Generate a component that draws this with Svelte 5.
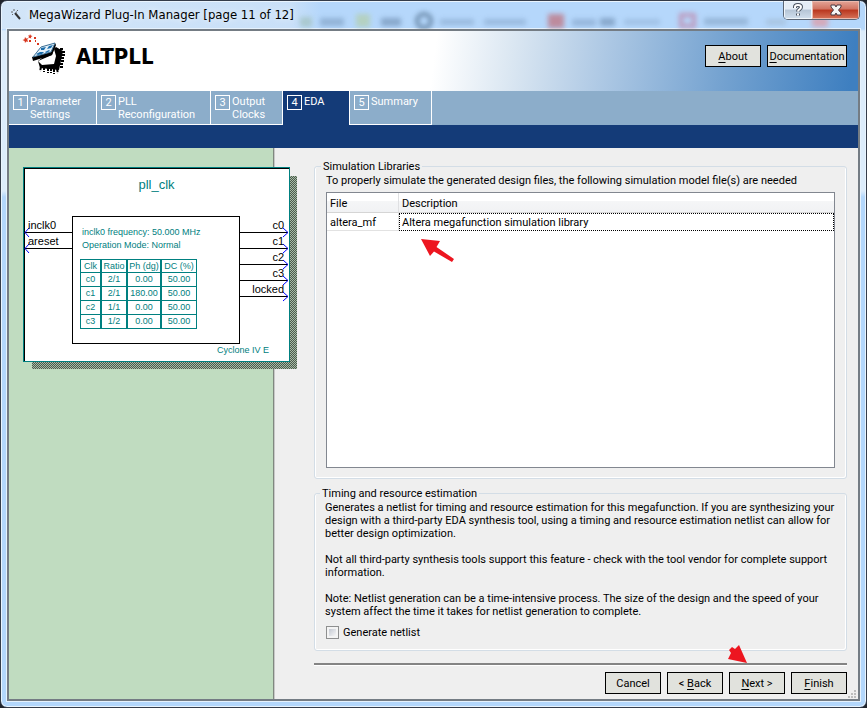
<script>
  const tabs = [
    { n: 1, lines: ['Parameter', 'Settings'], w: 88 },
    { n: 2, lines: ['PLL', 'Reconfiguration'], w: 114 },
    { n: 3, lines: ['Output', 'Clocks'], w: 72 },
    { n: 4, lines: ['EDA'], w: 66, active: true },
    { n: 5, lines: ['Summary'], w: 83, last: true }
  ];
  const clocks = [
    ['c0', '2/1', '0.00', '50.00'],
    ['c1', '2/1', '180.00', '50.00'],
    ['c2', '1/1', '0.00', '50.00'],
    ['c3', '1/2', '0.00', '50.00']
  ];
  const inputs = ['inclk0', 'areset'];
  const outputs = ['c0', 'c1', 'c2', 'c3', 'locked'];
  let netlist = $state(false);
</script>

<div class="window">
  <header class="titlebar">
    <svg class="glass" width="600" height="28" viewBox="0 0 600 28" aria-hidden="true">
      <defs><filter id="soft" x="-20%" y="-60%" width="140%" height="220%"><feGaussianBlur stdDeviation="2.5" /></filter></defs>
      <g filter="url(#soft)">
        <rect x="22" y="16" width="12" height="10" fill="#a3c2c0" />
        <rect x="42" y="17" width="24" height="8" fill="#86a7ca" />
        <rect x="78" y="13" width="14" height="13" fill="#b4cfae" />
        <rect x="103" y="17" width="20" height="8" fill="#7898bb" />
        <circle cx="146" cy="20" r="7" fill="none" stroke="#557392" stroke-width="4" />
        <rect x="162" y="18" width="34" height="6" fill="#90b0d4" />
        <rect x="206" y="18" width="42" height="6" fill="#90b0d4" />
        <rect x="270" y="13" width="16" height="14" fill="#c0727e" />
        <rect x="294" y="18" width="24" height="7" fill="#8cabd0" />
        <rect x="322" y="17" width="15" height="8" fill="#7898bb" />
        <rect x="346" y="18" width="36" height="6" fill="#9abade" />
        <rect x="403" y="14" width="13" height="11" fill="none" stroke="#c084a8" stroke-width="4" />
        <rect x="426" y="17" width="44" height="7" fill="#8babcd" />
        <rect x="488" y="18" width="20" height="6" fill="#a4bed8" />
        <rect x="534" y="16" width="16" height="10" fill="#e09aa4" />
      </g>
    </svg>
    <svg class="wand" width="12" height="12" viewBox="0 0 12 12" aria-hidden="true">
      <path d="M4 4L9 10" stroke="#333" stroke-width="2" />
      <path d="M3 0v2M0 3h2M6 2l1-1M1 6l1-1M5 3h1" stroke="#666" stroke-width="1" />
    </svg>
    <h1>MegaWizard Plug-In Manager [page 11 of 12]</h1>
    <div class="caption">
      <button class="help" aria-label="Help">
        <svg width="12" height="14" viewBox="0 0 12 14"><path d="M3 5V4q0-2 3-2t3 2q0 1.500-1.500 2.300T6 8.500M6 10.500v2" fill="none" stroke="#4a5360" stroke-width="4" /><path d="M3 5V4q0-2 3-2t3 2q0 1.500-1.500 2.300T6 8.500M6 10.500v2" fill="none" stroke="#fff" stroke-width="2" /></svg>
      </button>
      <button class="close" aria-label="Close">
        <svg width="12" height="12" viewBox="0 0 12 12"><path d="M1 1h4l1 2 1-2h4v2L8.500 6 11 9v2H7L6 9l-1 2H1V9l2.500-3L1 3z" fill="#f4f4f4" stroke="#4c3b43" stroke-width="1" /></svg>
      </button>
    </div>
  </header>

  <div class="client">
    <div class="banner">
      <svg class="logo" width="46" height="44" viewBox="0 0 46 44" aria-hidden="true">
        <g fill="#d8361e">
          <path d="M3 3l1.200 1.500 2-.3-1 1.600 1 1.900-2-.3L3 9l-.4-2L.500 6l2-.8z" />
          <path d="M8 0l.8 1.400L10.500 2 9 3l.2 1.800L8 3.700 6.300 4.300 7 2.700 6 1.400l1.600.1z" />
          <rect x="7" y="6" width="2" height="2" /><rect x="12" y="3" width="2" height="2" />
          <rect x="13" y="6" width="1" height="2" /><rect x="15" y="9" width="2" height="2" />
        </g>
        <path d="M16 27L18 34 37 36 41 17 34 13z" fill="#000" />
        <path d="M19 33l-1 4M22 33v5M26 34v5M29 34v5M32 35v5M35 35l1 4M38 33h4M38 30h4M39 27h4M39 24h4M40 21h3M40 18h3M38 15h4" stroke="#000" stroke-width="2" stroke-dasharray="3 1" />
        <path d="M16 27L30 21 32 15 34 22 32 30 20 31z" fill="#fff" />
        <path d="M10 23L28 18 33 9 34 11 30 21 11 27z" fill="#000" />
        <path d="M11 23L19 13 33 9 29 18z" fill="#e4f1fa" stroke="#3c6f94" stroke-width="1" />
        <path d="M19 14l5-1-2 3-3 0zM27 12l4-1-2 3-4 1zM14 20l4-2 4 0-2 2-4 1zM23 18l4-2 1 1-4 2" fill="#1b6dab" />
      </svg>
      <h2>ALTPLL</h2>
      <div class="links">
        <button><u>A</u>bout</button>
        <button class="doc"><u>D</u>ocumentation</button>
      </div>
    </div>

    <nav class="tabs">
      {#each tabs as t}
        <button class="tab" class:active={t.active} class:last={t.last} style="width:{t.w}px">
          <span class="num">{t.n}</span>
          <span>{#each t.lines as l}<span class="line">{l}</span>{/each}</span>
        </button>
      {/each}
    </nav>
    <div class="band"></div>

    <div class="body">
      <aside>
        <div class="symbol">
          <svg class="wires" width="265" height="193" viewBox="0 0 265 193" aria-hidden="true">
            <path d="M0 .5H265M.5 0V193" stroke="#000" />
            {#each inputs as _, i}
              <path d="M0 {64.5 + i * 16}H48" stroke="#000" />
              <path d="M5 {60 + i * 16}L1 {64.5 + i * 16}L5 {69 + i * 16}" fill="none" stroke="#00f" />
            {/each}
            {#each outputs as _, i}
              <path d="M215 {64.5 + i * 16}H264" stroke="#000" />
              <path d="M259 {60 + i * 16}L264 {64.5 + i * 16}L259 {69 + i * 16}" fill="none" stroke="#00f" />
            {/each}
          </svg>
          <div class="name">pll_clk</div>
          <div class="pins left">{#each inputs as p}<span>{p}</span>{/each}</div>
          <div class="pins right">{#each outputs as p}<span>{p}</span>{/each}</div>
          <div class="core">
            <p>inclk0 frequency: 50.000 MHz</p>
            <p>Operation Mode: Normal</p>
            <table>
              <thead><tr><th class="c1">Clk</th><th class="c2">Ratio</th><th class="c3">Ph (dg)</th><th class="c4">DC (%)</th></tr></thead>
              <tbody>
                {#each clocks as row}
                  <tr>{#each row as cell}<td>{cell}</td>{/each}</tr>
                {/each}
              </tbody>
            </table>
          </div>
          <div class="family">Cyclone IV E</div>
        </div>
      </aside>

      <main>
        <fieldset class="libs">
          <legend>Simulation Libraries</legend>
          <p>To properly simulate the generated design files, the following simulation model file(s) are needed</p>
          <div class="list">
            <table>
              <thead><tr><th class="file">File</th><th>Description</th></tr></thead>
              <tbody><tr><td>altera_mf</td><td class="focus">Altera megafunction simulation library</td></tr></tbody>
            </table>
            <svg class="mark first" width="36" height="24" viewBox="0 0 36 24" aria-hidden="true">
              <path d="M1 0L20 2L16.500 8L34 20L32 23L14 12.500L10 17z" fill="#ed1620" />
            </svg>
          </div>
        </fieldset>

        <fieldset class="timing">
          <legend>Timing and resource estimation</legend>
          <p>Generates a netlist for timing and resource estimation for this megafunction. If you are synthesizing your design with a third-party EDA synthesis tool, using a timing and resource estimation netlist can allow for better design optimization.</p>
          <p>Not all third-party synthesis tools support this feature - check with the tool vendor for complete support information.</p>
          <p>Note: Netlist generation can be a time-intensive process. The size of the design and the speed of your system affect the time it takes for netlist generation to complete.</p>
          <label><input type="checkbox" bind:checked={netlist} />Generate netlist</label>
        </fieldset>

        <footer>
          <button>Cancel</button>
          <button>&lt; <u>B</u>ack</button>
          <button><u>N</u>ext &gt;</button>
          <button><u>F</u>inish</button>
          <svg class="mark second" width="22" height="20" viewBox="0 0 22 20" aria-hidden="true">
            <path d="M20 19L1 15L4 9L2 6L5 3L8 5L12 1z" fill="#ed1620" />
          </svg>
        </footer>
        <svg class="grip" width="8" height="8" viewBox="0 0 8 8" aria-hidden="true">
          <path d="M6 0h2v2h-2zM3 3h2v2h-2zM6 3h2v2h-2zM0 6h2v2h-2zM3 6h2v2h-2zM6 6h2v2h-2z" fill="#bdbdbd" />
        </svg>
      </main>
    </div>
  </div>
</div>

<style>
  :global(body) { margin: 0; background: #20242c; }
  h1, h2, p { margin: 0; font-weight: normal; }
  button { font: inherit; color: inherit; padding: 0; margin: 0; box-sizing: border-box; }
  u { text-underline-offset: 2px; }

  .window {
    box-sizing: border-box;
    min-height: 100vh;
    display: flex;
    flex-direction: column;
    padding: 0 6px 6px;
    border: 1px solid #343c4a;
    border-radius: 7px;
    background:
      linear-gradient(90deg, #d2e5f8 0, #c9e0f8 290px, transparent 320px) 0 0 / 100% 28px no-repeat,
      linear-gradient(180deg, #b5d7fb 28px, #dcecfb 30px, #dcecfb 190px, #b3d7fc 196px);
    box-shadow: inset 0 0 0 1px #e9f4fe;
    font: 11px/13px Roboto, "Liberation Sans", sans-serif;
    color: #000;
  }
  .titlebar { position: relative; height: 28px; display: flex; align-items: center; padding-left: 4px; flex: none; }
  .glass { position: absolute; left: 271px; top: 0; opacity: .75; }
  .wand { position: relative; }
  h1 {
    position: relative;
    flex: 1;
    margin-left: 6px;
    font: 13px/20px "DejaVu Sans Condensed", "DejaVu Sans", sans-serif;
    white-space: nowrap;
    text-shadow: 0 0 6px #fff;
  }
  .caption { position: relative; display: flex; align-self: flex-start; height: 18px; border: 1px solid #5b6675; border-top: 0; border-radius: 0 0 5px 5px; overflow: hidden; }
  .caption button { border: 0; display: grid; place-items: center; }
  .help { width: 28px; background: linear-gradient(#e4edf6 0 45%, #b5c5d6 50%, #d2e0ee); box-shadow: inset 0 0 0 1px #f0f6fb; }
  .close { width: 47px; border-left: 1px solid #6b2a2a; background: linear-gradient(#e3a598 0, #d07361 45%, #b9361e 50%, #d7745a); box-shadow: inset 0 0 0 1px #eab9ad; }

  .client { flex: 1; display: flex; flex-direction: column; border: 2px solid #747c84; outline: 1px solid #e6f2fd; background: #efefef; }
  .banner {
    height: 60px;
    display: flex;
    align-items: flex-start;
    flex: none;
    padding: 0 11px 0 13px;
    background: linear-gradient(97deg, #fff 50%, #dbe7f2 59%, #adc8e4 70%, #74a2d0 84%, #3e7fc0 99%);
  }
  .logo { margin-top: 3px; }
  h2 { flex: 1; margin: 13px 0 0 8px; font: bold 22px/26px "DejaVu Sans Condensed", "DejaVu Sans", sans-serif; }
  .links, footer { display: flex; gap: 6px; }
  .links { margin-top: 14px; }
  .links button, footer button { width: 56px; height: 22px; border: 1px solid #000; background: #e1e2dd; white-space: nowrap; }
  .links .doc { width: 80px; }

  .tabs { display: flex; height: 34px; flex: none; background: #8cadca; color: #fff; }
  .tab { display: flex; align-items: flex-start; gap: 2px; padding: 4px 0 0 4px; border: 0 solid #fff; border-width: 0 1px 1px 0; background: none; text-align: left; font-size: 11px; line-height: 13px; }
  .tab.active { background: #143b78; border: 0; }
  .tab.last { border-left-width: 1px; }
  .num { box-sizing: border-box; width: 15px; height: 15px; border: 1px solid #fff; text-align: center; }
  .line { display: block; }
  .band { height: 23px; flex: none; background: #143b78; }

  .body { flex: 1; display: flex; }
  aside { position: relative; z-index: 1; flex: none; box-sizing: border-box; width: 265px; background: #c0dcc0; border-right: 1px solid #808880; box-shadow: 1px 0 #c8c8c8; padding: 19px 0 0 14px; }
  .symbol {
    position: relative;
    width: 265px;
    height: 193px;
    border: 1px solid #008080;
    background: #fff;
    font: 11px/13px "Liberation Sans", Arial, sans-serif;
    color: #000;
  }
  .symbol::before {
    content: "";
    position: absolute;
    z-index: -1;
    left: 8px;
    top: 8px;
    width: 265px;
    height: 193px;
    background: repeating-conic-gradient(#4d584d 0 25%, #a5bda5 0 50%) 0 0 / 2px 2px;
  }
  .wires { position: absolute; left: 0; top: 0; }
  .name, .core, .family { color: #008080; }
  .name { position: relative; padding-top: 9px; text-align: center; font-size: 13px; line-height: 15px; }
  .pins { position: absolute; top: 51px; display: flex; flex-direction: column; }
  .pins span { height: 16px; }
  .pins.left { left: 4px; }
  .pins.right { right: 5px; text-align: right; }
  .core { position: absolute; left: 48px; top: 48px; box-sizing: border-box; width: 168px; height: 128px; border: 1px solid #000; background: #fff; padding: 9px 0 0 7px; font-size: 9px; }
  .core p { padding-left: 2px; }
  .core table { margin-top: 7px; border-collapse: separate; border-spacing: 0; table-layout: fixed; width: 117px; border: 1px solid #008080; border-width: 1px 0 0 1px; }
  .core th, .core td { box-sizing: border-box; height: 14px; padding: 0; border: 0 solid #008080; border-width: 0 2px 1px 0; font-weight: normal; line-height: 13px; text-align: center; white-space: nowrap; }
  .core th { height: 13px; line-height: 12px; }
  .core th:last-child, .core td:last-child { border-right-width: 1px; }
  .c1 { width: 21px; }
  .c2 { width: 26px; }
  .c3 { width: 34px; }
  .family { position: absolute; right: 20px; bottom: 4px; font-size: 9px; }

  main { position: relative; flex: 1; min-width: 0; display: flex; flex-direction: column; padding: 12px 11px 5px 40px; }
  fieldset { min-width: 0; margin: 0; padding: 0 10px 10px; border: 1px solid #d3dde6; border-radius: 3px; box-shadow: inset -1px -1px #fff, inset 1px 0 #fff; }
  legend { margin-left: -5px; padding: 0 2px; }
  .libs { flex: 1; display: flex; flex-direction: column; padding: 0 11px 10px; }
  .libs p { margin: 1px 0 5px; }
  .list { position: relative; flex: 1; border: 1px solid #828790; background: #fff; }
  .list table { width: 100%; border-collapse: separate; border-spacing: 0; table-layout: fixed; }
  .list th { box-sizing: border-box; height: 20px; padding: 2px 3px 0; text-align: left; font-weight: normal; background: linear-gradient(#fff 40%, #f5f6f7 42%, #f1f2f4); border-bottom: 1px solid #d5d5d5; }
  .list .file { width: 72px; border-right: 1px solid #dfe0e2; }
  .list td { box-sizing: border-box; height: 18px; padding: 2px 3px 0; border-bottom: 1px solid #e2e2e2; border-right: 1px solid #e2e2e2; }
  .list .focus { border: 1px dotted #000; padding: 1px 2px 0; }
  .mark { position: absolute; }
  .first { left: 93px; top: 46px; }
  .timing { margin-top: 8px; padding-bottom: 11px; }
  .timing p { margin: 1px 0 13px; }
  .timing p + p { margin-top: 0; }
  .timing p:nth-of-type(3) { margin-bottom: 8px; }
  label { display: flex; align-items: center; gap: 4px; margin-left: 1px; }
  input { appearance: none; box-sizing: border-box; width: 13px; height: 13px; margin: 0; border: 1px solid #8e8f8f; background: linear-gradient(135deg, #c4c9d2, #f6f6f6) content-box, #f4f4f4; padding: 2px; }
  input:checked { background: #35506e content-box; }
  footer { position: relative; justify-content: flex-end; margin-top: 12px; border-top: 2px solid #848484; box-shadow: inset 0 1px #fff; padding-top: 7px; }
  .second { right: 98px; top: -21px; }
  .grip { position: absolute; right: 2px; bottom: 1px; }
</style>
